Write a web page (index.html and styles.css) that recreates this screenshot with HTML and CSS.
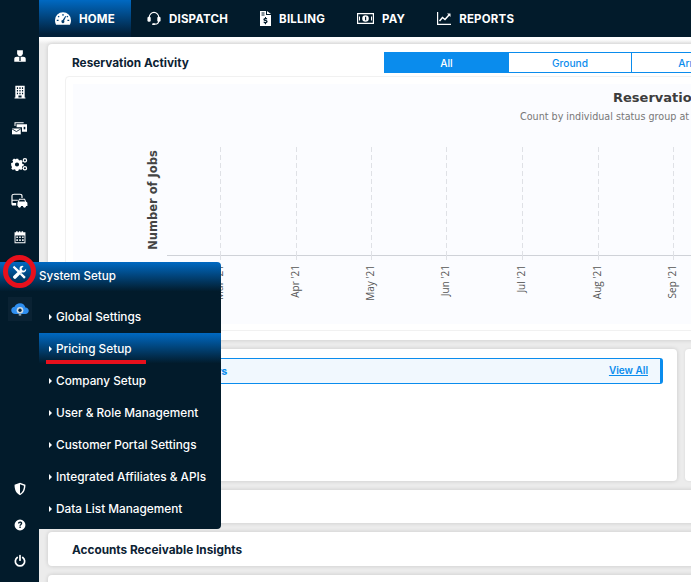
FILE: index.html
```html
<!DOCTYPE html>
<html lang="en">
<head>
<meta charset="utf-8">
<title>System Setup</title>
<link rel="stylesheet" href="styles.css">
</head>
<body>
<div class="app">
  <aside class="rail">
    <div class="rail-group">
      <span class="rail-icon"><svg viewBox="-2 -2 22 22"><path d="M4.500 0h9v4.500c0 2.500-1.800 4.500-4.500 4.500S4.500 7 4.500 4.500z"/><path fill-rule="evenodd" d="M4 10h10c2.500 0 4 1.200 4 3.500V18H0v-4.500C0 11.200 1.500 10 4 10zM7.500 10.500v6.500h1V10.500zm2 0v6.500h1V10.500z"/></svg></span>
      <span class="rail-icon"><svg viewBox="0 0 18 18"><path fill-rule="evenodd" d="M3 1h12v15h1v1.500H2V16h1zM5 3v2h1.500V3zm3.200 0v2h1.600V3zm3.300 0v2H13V3zM5 6.500v2h1.500v-2zm3.200 0v2h1.600v-2zm3.300 0v2H13v-2zM5 10v2h1.500v-2zm3.200 0v2h1.600v-2zm3.300 0v2H13v-2zM7 13.500V16h4v-2.500z"/></svg></span>
      <span class="rail-icon rail-icon-wide"><svg viewBox="0 0 20 18"><path d="M4 1.500h11v1.200H5.200V6H4zM6.500 4H19v9h-6V7.500H6.500z"/><path fill="#021b2b" d="M15 7h2v3h-2z"/><path d="M1 9h10.500v7H1z"/><path fill="none" stroke="#021b2b" stroke-width="1" d="M1 9.500l5.300 3.200 5.200-3.200"/></svg></span>
      <span class="rail-icon rail-icon-wide"><svg viewBox="0 0 20 18"><path fill-rule="evenodd" d="M5.500 3.500h3l.4 1.700 1.500.6 1.500-.9 2 2-.9 1.500.6 1.500 1.700.4v1.500l-1.700.4-.6 1.500.9 1.500-2 2-1.500-.9-1.500.6-.4 1.500h-3l-.4-1.500-1.500-.6-1.500.9-2-2 .9-1.500-.6-1.500L0 11.300V8.800l1.700-.4.6-1.500-.9-1.500 2-2 1.500.9 1.100-.5zM7 8a2.500 2.500 0 1 0 0 5 2.500 2.500 0 0 0 0-5z" transform="translate(0 -1.500)"/><circle cx="16.500" cy="4" r="2" fill="none" stroke="#fff" stroke-width="1.500"/><circle cx="16.500" cy="13.500" r="2" fill="none" stroke="#fff" stroke-width="1.500"/></svg></span>
      <span class="rail-icon rail-icon-wide"><svg viewBox="0 0 20 18"><path fill="none" stroke="#fff" stroke-width="1.400" d="M1 14V3.500C1 2 2 1.500 3.500 1.500h7c1.500 0 2.500.5 2.500 2V6"/><path d="M1 8h7v1.200H1zM1 12h5v3H1z"/><path d="M8 10.500l1.500-3.500h7l1.500 3.500c1 .3 1.500 1 1.500 2v3h-12v-3c0-1 .5-1.700.500-2z"/><circle cx="10" cy="16" r="1.700"/><circle cx="16" cy="16" r="1.700"/><path fill="#021b2b" d="M10.200 8.200h5.600l.8 2H9.400z"/></svg></span>
      <span class="rail-icon"><svg viewBox="0 0 18 18"><path fill-rule="evenodd" d="M2 3h2V1.500h2V3h1.500V1.500h2V3H11V1.500h2V3h1.500V3H16v14H2zM3.200 7v8.800h11.600V7zM4.300 8.300h2v2h-2zm3.700 0h2v2H8zm3.700 0h2v2h-2zM4.300 12h2v2h-2zM8 12h2v2H8zm3.700 0h2v2h-2z"/></svg></span>
      <span class="rail-icon rail-icon-tools"><svg viewBox="0 0 18 18"><path d="M2.500 1l5 4.500 1 1 1.800 1.800-2 2-1.800-1.800-1-1L1 3zM16.500 14.500l-2 2-5-5 2-2z"/><path d="M12.500 1c-2 0-3.500 1.500-3.500 3.500 0 .5.100 1 .3 1.400L2 13c-1 1-1 2 0 3s2 1 3 0l7.100-7.300c.4.200.9.300 1.400.3 2 0 3.500-1.500 3.500-3.500l-.1-1-2.400 2.400-2.400-.6-.6-2.400 2.400-2.400z"/></svg></span>
      <span class="rail-icon rail-icon-cloud"><svg viewBox="0 0 24 24"><path fill="#2f8ff0" d="M6.500 18C3.500 18 1.500 16 1.500 13.500S3.500 9.500 5.500 9.300C6.500 6.500 9 5 12 5c3.500 0 6 2.300 6.500 5.300 2.300.2 4 1.700 4 3.900 0 2.200-1.700 3.800-4 3.800z"/><circle cx="12" cy="13.500" r="4" fill="#cfd8df"/><circle cx="12" cy="13.500" r="2" fill="#0a2233"/><path fill="#8ea0ad" d="M10.500 17h3v3h-3z"/></svg></span>
    </div>
    <div class="rail-group rail-bottom">
      <span class="rail-icon"><svg viewBox="0 0 18 18"><path fill-rule="evenodd" d="M9 1l7 2.500c0 6-1.500 10.500-7 13.500-5.500-3-7-7.500-7-13.500zM9 3v12c3.800-2.300 5-6 5.100-10.200z"/></svg></span>
      <span class="rail-icon"><svg viewBox="0 0 18 18"><path fill-rule="evenodd" d="M9 2a7 7 0 1 1 0 14A7 7 0 0 1 9 2zM6.300 7.200h1.900c.1-.7.300-1 .9-1s.9.300.9.800c0 .9-1.700 1.200-1.700 3.100h1.800c0-1.200 1.800-1.500 1.800-3.300 0-1.500-1.200-2.300-2.800-2.300-1.700 0-2.700 1-2.800 2.700zM8.200 11v1.800H10V11z"/></svg></span>
      <span class="rail-icon"><svg viewBox="0 0 18 18"><path fill="none" stroke="#fff" stroke-width="2.200" stroke-linecap="round" d="M5.500 4.500a6 6 0 1 0 7 0M9 2v6"/></svg></span>
    </div>
  </aside>

  <div class="shell">
    <nav class="topbar">
      <a class="tab tab-active"><svg class="tab-icon tab-icon-home" viewBox="0 0 18 14"><path fill-rule="evenodd" d="M9 0a9 9 0 0 1 9 9c0 2-.5 3.500-1.200 5H1.200C.5 12.500 0 11 0 9a9 9 0 0 1 9-9zM8.300 2v2h1.400V2zM4 3.800L3 4.800l1.200 1.200 1-1zM14 3.800L12.800 5l1 1L15 4.800zM2 8.300v1.400h2V8.300zM14 8.300v1.400h2V8.300zM11.600 4.300L8.700 8.800a1.700 1.700 0 1 0 1.500.6l2.300-4.700z"/></svg>HOME</a>
      <a class="tab"><svg class="tab-icon" viewBox="0 0 14 16"><path fill="none" stroke="#fff" stroke-width="1.200" d="M2 8V6.500a5 5 0 0 1 10 0V10c0 2.500-1.500 4-4 4H6.500"/><rect x="0" y="6" width="3.500" height="5.500" rx="1.500"/><rect x="10.500" y="6" width="3.500" height="5.500" rx="1.500"/><rect x="5" y="13" width="3" height="2" rx="1"/></svg>DISPATCH</a>
      <a class="tab"><svg class="tab-icon tab-icon-bill" viewBox="0 0 11 15"><path fill-rule="evenodd" d="M0 0h6v4h5v11H0zM7 0l4 3H7zM1.500 1.500v1h3v-1zm0 2v1h3v-1zM5 6v1c-1 .2-1.600.8-1.600 1.600 0 1.800 2.800 1.300 2.800 2.100 0 .5-1.400.5-2.500-.1v1.300c.4.200.8.300 1.300.3v1h1v-1c1-.2 1.600-.8 1.600-1.600 0-1.800-2.800-1.300-2.800-2.100 0-.4 1.200-.5 2.300 0V7.200c-.3-.1-.7-.2-1.100-.2V6z"/></svg>BILLING</a>
      <a class="tab"><svg class="tab-icon tab-icon-pay" viewBox="0 0 17 11"><path fill-rule="evenodd" d="M0 0h17v11H0zM1.200 1.200v8.600h14.600V1.200z"/><path d="M3 2.500c-.3 1-.6 1.300-1 1.500v3c.4.200.7.500 1 1.500zM14 2.500c.3 1 .6 1.300 1 1.500v3c-.4.200-.7.500-1 1.500zM8.500 2.200a3.300 3.300 0 1 1 0 6.600 3.300 3.300 0 0 1 0-6.600z"/><path fill="#021b2b" d="M8 3.800h1.200v3.400H8z"/></svg>PAY</a>
      <a class="tab"><svg class="tab-icon" viewBox="0 0 14 13"><path d="M0 0h1.200v11.800H14V13H0z"/><path fill="none" stroke="#fff" stroke-width="1.500" d="M2.500 9l3-3.500 2.500 2 4-4.500"/><path d="M10 1.500h3.500V5z"/></svg>REPORTS</a>
    </nav>

    <main class="content">
      <section class="card card-activity">
        <header class="activity-head">
          <h2 class="card-title">Reservation Activity</h2>
          <div class="segments">
            <span class="segment segment-on">All</span>
            <span class="segment">Ground</span>
            <span class="segment">Arrive</span>
          </div>
        </header>
        <div class="chart-frame">
          <svg class="chart" viewBox="0 0 640 240" width="640" height="240">
            <text class="chart-title" x="540" y="18">Reservation Activity</text>
            <text class="chart-sub" x="447" y="36">Count by individual status group at a glance</text>
            <g class="grid">
              <path d="M147.500 63v108M223.500 63v108M298.500 63v108M373.500 63v108M449.500 63v108M525.500 63v108M600.500 63v108"/>
            </g>
            <path class="axis" d="M94 171.500h546"/>
            <path class="tick" d="M147.500 171v5M223.500 171v5M298.500 171v5M373.500 171v5M449.500 171v5M525.500 171v5M600.500 171v5"/>
            <text class="y-title" transform="translate(83.500 116) rotate(-90)">Number of Jobs</text>
            <text class="x-label" transform="translate(149.500 181) rotate(-90)">Mar '21</text>
            <text class="x-label" transform="translate(225.500 181) rotate(-90)">Apr '21</text>
            <text class="x-label" transform="translate(300.500 181) rotate(-90)">May '21</text>
            <text class="x-label" transform="translate(375.500 181) rotate(-90)">Jun '21</text>
            <text class="x-label" transform="translate(451.500 181) rotate(-90)">Jul '21</text>
            <text class="x-label" transform="translate(527.500 181) rotate(-90)">Aug '21</text>
            <text class="x-label" transform="translate(602.500 181) rotate(-90)">Sep '21</text>
          </svg>
        </div>
      </section>

      <div class="split-row">
        <section class="card card-reminders">
          <div class="notice">
            <span class="notice-title">Open Reminders</span>
            <a class="notice-link">View All</a>
          </div>
        </section>
        <section class="card card-side"></section>
      </div>

      <section class="card card-blank"></section>
      <section class="card card-insights"><h2 class="card-title">Accounts Receivable Insights</h2></section>
      <section class="card card-last"></section>
    </main>
  </div>

  <div class="flyout">
    <div class="flyout-head">System Setup</div>
    <ul class="flyout-list">
      <li class="flyout-item">Global Settings</li>
      <li class="flyout-item flyout-item-on">Pricing Setup</li>
      <li class="flyout-item">Company Setup</li>
      <li class="flyout-item">User &amp; Role Management</li>
      <li class="flyout-item">Customer Portal Settings</li>
      <li class="flyout-item">Integrated Affiliates &amp; APIs</li>
      <li class="flyout-item">Data List Management</li>
    </ul>
  </div>
  <span class="mark-circle"></span>
  <span class="mark-line"></span>
</div>
</body>
</html>
```

FILE: styles.css
```css
* { box-sizing: border-box; }
html, body { margin: 0; height: 100%; }
body { overflow: hidden; background: #fff; font-family: Inter, "Liberation Sans", sans-serif; color: #0c2233; }

.app { position: relative; display: flex; width: 691px; height: 582px; overflow: hidden; }

.rail { flex: 0 0 39px; display: flex; flex-direction: column; justify-content: space-between; padding: 38px 0 3px; background: #021b2b; }
.rail-group { display: flex; flex-direction: column; align-items: center; }
.rail-icon { display: flex; align-items: center; justify-content: center; width: 39px; height: 36.100px; }
.rail-icon svg { width: 14px; height: 14px; fill: #fff; }
.rail-icon-wide svg { width: 17px; height: 15px; }
.rail-icon-tools { position: relative; z-index: 3; }
.rail-icon-tools svg { width: 15px; height: 15px; }
.rail-icon-cloud svg { width: 24px; height: 24px; padding: 2px; background: #0a2233; }

.shell { flex: 1; min-width: 0; display: flex; flex-direction: column; }
.topbar { flex: 0 0 37px; display: flex; background: #021b2b; }
.tab { display: flex; align-items: center; gap: 8px; padding: 0 16px; color: #fff; font-size: 11.500px; font-weight: 700; letter-spacing: 0.2px; }
.tab-active { background: linear-gradient(#0069c2, #02203a 92%); }
.tab-icon { width: 14px; height: 15px; fill: #fff; }
.tab-icon-home { width: 16px; height: 13px; }
.tab-icon-bill { width: 11px; height: 15px; }
.tab-icon-pay { width: 17px; height: 11px; }

.content { flex: 1; display: flex; flex-direction: column; gap: 9px; padding: 7px 0 0 9px; background: linear-gradient(#fff 2px, #ececec 7px); }
.card { background: #fff; border-radius: 4px; box-shadow: 0 0 4px rgba(0, 0, 0, .16); flex: none; }
.card-title { margin: 0; font-size: 11.800px; font-weight: 700; color: #0c2233; }

.card-activity { width: 700px; height: 296px; padding: 8px 0 0 17px; }
.activity-head { display: flex; align-items: center; height: 21px; margin: 0 0 4px 7px; }
.activity-head .card-title { width: 312px; flex: none; }
.segments { display: flex; flex: none; border: 1px solid #0a8ced; height: 21px; }
.segment { width: 123px; display: flex; align-items: center; justify-content: center; font-size: 10.200px; font-weight: 500; color: #0a8ced; border-right: 1px solid #0a8ced; }
.segment-on { width: 124px; background: #0a8ced; color: #fff; }

.chart-frame { width: 640px; height: 255px; margin-top: -1px; padding: 7px 0 0 7px; border: 1px solid #f1f1f1; border-radius: 4px; background: #fff; }
.chart { display: block; background: #fbfcff; }
.chart-title { font: 700 13px "DejaVu Sans", sans-serif; fill: #3d3d3d; }
.chart-sub { font: 9.600px "DejaVu Sans", sans-serif; fill: #777; }
.grid path { fill: none; stroke: #dfe1e6; stroke-dasharray: 5 3; }
.axis { fill: none; stroke: #cfd2d8; }
.tick { fill: none; stroke: #dfe1e6; }
.y-title { font: 700 11.500px "DejaVu Sans", sans-serif; fill: #444; text-anchor: middle; }
.x-label { font: 10px "Open Sans", sans-serif; fill: #555; text-anchor: end; }

.split-row { display: flex; gap: 8px; flex: none; }
.card-reminders { width: 629px; height: 132px; padding: 9px 14px 0 14px; }
.card-side { width: 60px; box-shadow: 0 0 3px rgba(0, 0, 0, .08); }
.notice { display: flex; align-items: center; justify-content: space-between; height: 26px; padding: 0 12px 0 77px; background: #f1f8fe; border: 1px solid #0a8ced; border-right-width: 3px; border-radius: 3px; color: #0a8ced; font-size: 10.800px; font-weight: 700; }
.notice-link { font-size: 10px; font-weight: 600; text-decoration: underline; margin-top: -2px; }

.card-blank { height: 33px; width: 700px; }
.card-insights { height: 34px; width: 700px; display: flex; align-items: center; padding: 1px 0 0 24px; }
.card-last { height: 40px; width: 700px; }

.flyout { position: absolute; left: 0; top: 262px; width: 221px; z-index: 2; }
.flyout-head { height: 31px; padding: 0 0 4px 39px; display: flex; align-items: center; font-size: 11.600px; font-weight: 500; color: #fff; background: linear-gradient(#0069c2, #021b2b 95%); border-radius: 0 4px 0 0; }
.flyout-list { list-style: none; margin: 0 0 0 39px; padding: 8px 0 4px; background: #021b2b; border-radius: 0 0 4px 0; }
.flyout-item { position: relative; display: flex; align-items: center; height: 32px; padding-left: 17px; font-size: 11.800px; font-weight: 500; color: #fff; }
.flyout-item::before { content: ""; position: absolute; left: 10px; top: 13px; border-left: 3px solid #fff; border-top: 3px solid transparent; border-bottom: 3px solid transparent; }
.flyout-item-on { background: linear-gradient(#0069c2, #021b2b 95%); }

.mark-circle { position: absolute; left: 3px; top: 255px; width: 33px; height: 33px; border: 5px solid #e8101c; border-radius: 50%; z-index: 4; }
.mark-line { position: absolute; left: 46px; top: 360px; width: 100px; height: 4px; background: #e8101c; z-index: 4; }
```
